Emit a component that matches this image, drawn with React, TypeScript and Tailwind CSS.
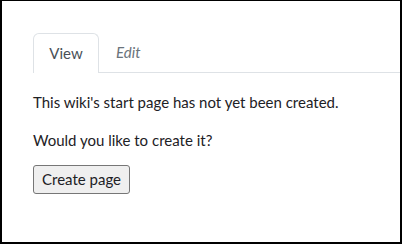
export default function App() {
  return (
    <div className="h-[244px] w-[402px] border-x-2 border-t border-b-2 border-black bg-white font-['Lato',sans-serif] text-[15px] text-[#1d2125]">
      <div className="pl-[31px] pt-[32px]">
        <div className="flex border-b border-[#dee2e6] h-[40px]">
          <div className="w-[66px] rounded-t-[6px] border border-b-0 border-[#dee2e6] bg-white -mb-px flex items-center justify-center text-[#495057]">
            View
          </div>
          <div className="flex items-center pl-[17px] italic text-[#6a737b]">Edit</div>
        </div>
        <p className="mt-[18px] leading-[22px]">This wiki's start page has not yet been created.</p>
        <p className="mt-[16px] leading-[22px]">Would you like to create it?</p>
        <button className="mt-[14px] h-[29px] w-[97px] rounded-[3px] border border-[#767676] bg-[#efefef] text-[#1d2125]">
          Create page
        </button>
      </div>
    </div>
  );
}
